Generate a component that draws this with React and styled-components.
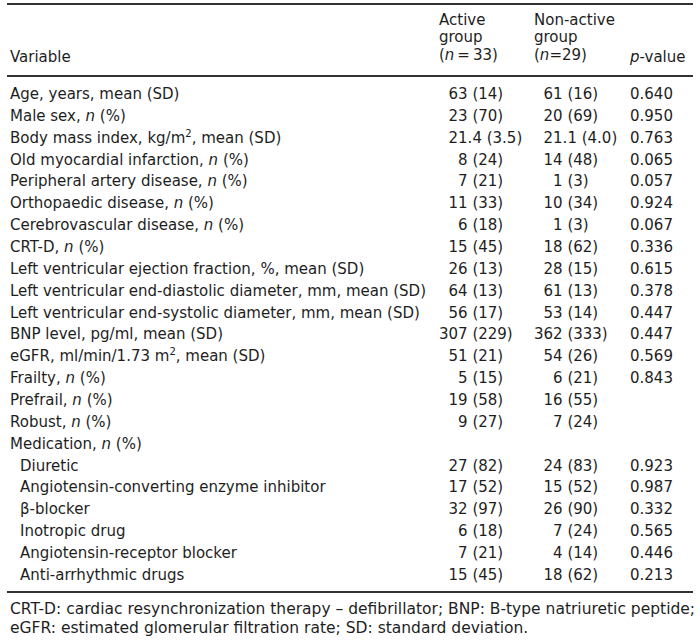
import React from "react";
import styled, { createGlobalStyle } from "styled-components";

const GlobalStyle = createGlobalStyle`
  html, body {
    margin: 0;
    padding: 0;
    background: #fff;
  }
  body {
    font-family: "DejaVu Sans", Verdana, sans-serif;
    font-size: 15px;
    color: #1e1e1e;
  }
`;

const Page = styled.div`
  width: 686px;
  padding: 3px 7px 0 7px;
`;

const Table = styled.table`
  width: 100%;
  border-collapse: collapse;
  table-layout: fixed;
  border-top: 2px solid #333;
  border-bottom: 2px solid #333;
`;

const HeadRow = styled.tr`
  height: 72px;
  border-bottom: 2px solid #333;
`;

const HeadCell = styled.th`
  width: ${(p) => p.width || "auto"};
  padding: 0 0 ${(p) => p.bottom || 6}px ${(p) => p.left || 0}px;
  font-weight: normal;
  text-align: left;
  vertical-align: bottom;
  line-height: ${(p) => p.lh || "21.86px"};
`;

const Row = styled.tr`
  &:first-child td {
    padding-top: 7px;
  }
  &:last-child td {
    padding-bottom: 4px;
  }
`;

const Cell = styled.td`
  padding: 0 0 0 ${(p) => p.left || 0}px;
  line-height: 21.86px;
  white-space: nowrap;
  vertical-align: top;
`;

const Int = styled.span`
  display: inline-block;
  width: 1.908em;
  text-align: right;
`;

const I = styled.i`
  font-style: italic;
`;

const Sup = styled.sup`
  font-size: 10px;
  line-height: 0;
  vertical-align: 6px;
`;

const Footer = styled.div`
  padding: 7px 0 0 3px;
  font-size: 15.5px;
  line-height: 19px;
`;

const FootLine = styled.div`
  white-space: nowrap;
`;

const nPct = (
  <>
    <I>n</I> (%)
  </>
);

const rows = [
  { label: <>Age, years, mean (SD)</>, a: "63 (14)", b: "61 (16)", p: "0.640" },
  { label: <>Male sex, {nPct}</>, a: "23 (70)", b: "20 (69)", p: "0.950" },
  {
    label: (
      <>
        Body mass index, kg/m<Sup>2</Sup>, mean (SD)
      </>
    ),
    a: "21.4 (3.5)",
    b: "21.1 (4.0)",
    p: "0.763",
  },
  { label: <>Old myocardial infarction, {nPct}</>, a: "8 (24)", b: "14 (48)", p: "0.065" },
  { label: <>Peripheral artery disease, {nPct}</>, a: "7 (21)", b: "1 (3)", p: "0.057" },
  { label: <>Orthopaedic disease, {nPct}</>, a: "11 (33)", b: "10 (34)", p: "0.924" },
  { label: <>Cerebrovascular disease, {nPct}</>, a: "6 (18)", b: "1 (3)", p: "0.067" },
  { label: <>CRT-D, {nPct}</>, a: "15 (45)", b: "18 (62)", p: "0.336" },
  { label: <>Left ventricular ejection fraction, %, mean (SD)</>, a: "26 (13)", b: "28 (15)", p: "0.615" },
  { label: <>Left ventricular end-diastolic diameter, mm, mean (SD)</>, a: "64 (13)", b: "61 (13)", p: "0.378" },
  { label: <>Left ventricular end-systolic diameter, mm, mean (SD)</>, a: "56 (17)", b: "53 (14)", p: "0.447" },
  { label: <>BNP level, pg/ml, mean (SD)</>, a: "307 (229)", b: "362 (333)", p: "0.447" },
  {
    label: (
      <>
        eGFR, ml/min/1.73 m<Sup>2</Sup>, mean (SD)
      </>
    ),
    a: "51 (21)",
    b: "54 (26)",
    p: "0.569",
  },
  { label: <>Frailty, {nPct}</>, a: "5 (15)", b: "6 (21)", p: "0.843" },
  { label: <>Prefrail, {nPct}</>, a: "19 (58)", b: "16 (55)", p: "" },
  { label: <>Robust, {nPct}</>, a: "9 (27)", b: "7 (24)", p: "" },
  { label: <>Medication, {nPct}</>, a: "", b: "", p: "" },
  { label: "Diuretic", sub: true, a: "27 (82)", b: "24 (83)", p: "0.923" },
  { label: "Angiotensin-converting enzyme inhibitor", sub: true, a: "17 (52)", b: "15 (52)", p: "0.987" },
  { label: "β-blocker", sub: true, a: "32 (97)", b: "26 (90)", p: "0.332" },
  { label: "Inotropic drug", sub: true, a: "6 (18)", b: "7 (24)", p: "0.565" },
  { label: "Angiotensin-receptor blocker", sub: true, a: "7 (21)", b: "4 (14)", p: "0.446" },
  { label: "Anti-arrhythmic drugs", sub: true, a: "15 (45)", b: "18 (62)", p: "0.213" },
];

// decimal alignment: integer part right-aligned in a 3-digit slot
const Value = ({ text }) => {
  if (!text) return null;
  const m = text.match(/^(\d+)(.*)$/);
  return (
    <>
      <Int>{m[1]}</Int>
      {m[2]}
    </>
  );
};

export default function App() {
  return (
    <Page>
      <GlobalStyle />
      <Table>
        <thead>
          <HeadRow>
            <HeadCell width="429px" left={3}>
              Variable
            </HeadCell>
            <HeadCell width="95px" bottom={11} lh="17.5px">
              Active
              <br />
              group
              <br />(<I>n</I>&#8201;=&#8201;33)
            </HeadCell>
            <HeadCell width="96px" bottom={11} lh="17.5px">
              Non-active
              <br />
              group
              <br />(<I>n</I>=29)
            </HeadCell>
            <HeadCell>
              <I>p</I>-value
            </HeadCell>
          </HeadRow>
        </thead>
        <tbody>
          {rows.map((r, i) => (
            <Row key={i}>
              <Cell left={r.sub ? 13 : 3}>{r.label}</Cell>
              <Cell>
                <Value text={r.a} />
              </Cell>
              <Cell>
                <Value text={r.b} />
              </Cell>
              <Cell>{r.p}</Cell>
            </Row>
          ))}
        </tbody>
      </Table>
      <Footer>
        <FootLine>
          CRT-D: cardiac resynchronization therapy – defibrillator; BNP: B-type natriuretic peptide;
        </FootLine>
        <FootLine>eGFR: estimated glomerular filtration rate; SD: standard deviation.</FootLine>
      </Footer>
    </Page>
  );
}
